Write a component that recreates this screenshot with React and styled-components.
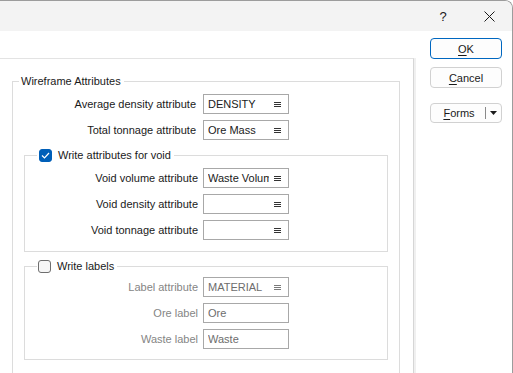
import React from "react";
import styled, { createGlobalStyle } from "styled-components";

const Global = createGlobalStyle`
  body { margin: 0; background: #fff; }
  * { box-sizing: border-box; }
`;

const FONT = `"Segoe UI", "Liberation Sans", Arial, sans-serif`;

const Window = styled.div`
  width: 513px;
  height: 373px;
  overflow: hidden;
  background: #fff;
  border-top: 1px solid #9c9c9c;
  border-right: 1px solid #9c9c9c;
  border-top-right-radius: 8px;
  font-family: ${FONT};
  font-size: 11px;
  color: #1a1a1a;
`;

const TitleBar = styled.div`
  height: 30px;
  background: #f3f3f3;
  display: flex;
  justify-content: flex-end;
  align-items: center;
`;

const TitleButton = styled.div`
  width: 46px;
  height: 30px;
  display: flex;
  align-items: center;
  justify-content: center;
  font-size: 13px;
  color: #1a1a1a;
`;

const Body = styled.div`
  display: flex;
  align-items: flex-start;
`;

const Panel = styled.div`
  margin-top: 27px;
  width: 414px;
  height: 330px;
  border-top: 1px solid #e3e3e3;
  border-right: 1px solid #d6d6d6;
  box-shadow: 2px 0 0 #f0f0f0;
  padding-left: 12px;
`;

const ButtonColumn = styled.div`
  margin-top: 7px;
  margin-left: 16px;
  display: flex;
  flex-direction: column;
  width: 72px;
`;

const Button = styled.div`
  height: ${(p) => p.$h || 21}px;
  margin-top: ${(p) => p.$mt || 0}px;
  border: 1px solid ${(p) => (p.$default ? "#0067c0" : "#d1d1d1")};
  border-radius: 4px;
  background: #fdfdfd;
  display: flex;
  align-items: center;
  justify-content: center;
  color: #1a1a1a;
`;

const Mnemonic = styled.span`
  text-decoration: underline;
  text-underline-offset: 2px;
`;

const SplitLabel = styled.div`
  flex: 1;
  text-align: center;
  padding-left: 2px;
`;

const SplitDivider = styled.div`
  width: 1px;
  height: 12px;
  background: #8a8a8a;
`;

const SplitArrow = styled.div`
  width: 15px;
  display: flex;
  justify-content: center;
  align-items: center;
`;

const Group = styled.fieldset`
  margin: ${(p) => p.$mt || 0}px ${(p) => p.$mx || 0}px 0;
  padding: ${(p) => p.$pt || 5}px 0 ${(p) => p.$pb || 10}px;
  border: 1px solid #dcdcdc;
  width: ${(p) => (p.$w ? p.$w + "px" : "auto")};
  height: ${(p) => (p.$hgt ? p.$hgt + "px" : "auto")};
  min-width: 0;
  display: flex;
  flex-direction: column;
  gap: ${(p) => p.$gap || 6}px;
`;

const Legend = styled.legend`
  margin-left: ${(p) => p.$ml}px;
  padding: 0 3px 0 ${(p) => p.$pl || 2}px;
  height: 16px;
  line-height: 16px;
  display: flex;
  align-items: center;
  gap: 6px;
  color: #1a1a1a;
`;

const Check = styled.span`
  width: 13px;
  height: 13px;
  border-radius: 3px;
  display: inline-flex;
  align-items: center;
  justify-content: center;
  background: ${(p) => (p.$checked ? "#005fb8" : "#f6f6f6")};
  border: 1px solid ${(p) => (p.$checked ? "#005fb8" : "#6e6e6e")};
`;

const Row = styled.div`
  display: grid;
  grid-template-columns: ${(p) => p.$label}px 86px;
  column-gap: ${(p) => p.$gap}px;
  align-items: center;
  height: 20px;
`;

const Label = styled.span`
  text-align: right;
  white-space: nowrap;
  color: ${(p) => (p.$disabled ? "#858585" : "#1a1a1a")};
`;

const Input = styled.div`
  height: 20px;
  border: 1px solid #a8a8a8;
  display: flex;
  align-items: center;
  padding: 0 7px 0 4px;
  color: ${(p) => (p.$disabled ? "#6d6d6d" : "#1a1a1a")};
  background: #fff;
`;

const Value = styled.span`
  flex: 1;
  overflow: hidden;
  white-space: nowrap;
  margin-right: 5px;
`;

const ListIcon = ({ disabled }) => (
  <svg width="7" height="7" viewBox="0 0 7 7">
    <g stroke={disabled ? "#7a7a7a" : "#333"} strokeWidth="1">
      <line x1="0" y1="1.5" x2="7" y2="1.5" />
      <line x1="0" y1="3.5" x2="7" y2="3.5" />
      <line x1="0" y1="5.5" x2="7" y2="5.5" />
    </g>
  </svg>
);

const Field = ({ label, value, list, disabled, labelW, gap }) => (
  <Row $label={labelW} $gap={gap}>
    <Label $disabled={disabled}>{label}</Label>
    <Input $disabled={disabled}>
      <Value>{value}</Value>
      {list && <ListIcon disabled={disabled} />}
    </Input>
  </Row>
);

export default function App() {
  return (
    <>
      <Global />
      <Window>
        <TitleBar>
          <TitleButton>?</TitleButton>
          <TitleButton>
            <svg width="11" height="11" viewBox="0 0 11 11">
              <path d="M0.5 0.5 L10.5 10.5 M10.5 0.5 L0.5 10.5" stroke="#1a1a1a" strokeWidth="1" />
            </svg>
          </TitleButton>
        </TitleBar>
        <Body>
          <Panel>
            <Group $mt={14} $w={388} $hgt={320} $pt={5}>
              <Legend $ml={6}>Wireframe Attributes</Legend>
              <Field label="Average density attribute" value="DENSITY" list labelW={183} gap={7} />
              <Field label="Total tonnage attribute" value="Ore Mass" list labelW={183} gap={7} />
              <Group $mt={1} $mx={11} $pt={5} $pb={11} $gap={6}>
                <Legend $ml={12} $pl={2}>
                  <Check $checked>
                    <svg width="9" height="7" viewBox="0 0 9 7">
                      <path d="M1 3.5 L3.5 6 L8 1" fill="none" stroke="#fff" strokeWidth="1.2" />
                    </svg>
                  </Check>
                  Write attributes for void
                </Legend>
                <Field label="Void volume attribute" value="Waste Volume" list labelW={173} gap={5} />
                <Field label="Void density attribute" value="" list labelW={173} gap={5} />
                <Field label="Void tonnage attribute" value="" list labelW={173} gap={5} />
              </Group>
              <Group $mt={0} $mx={11} $pt={3} $pb={10}>
                <Legend $ml={12} $pl={1}>
                  <Check />
                  Write labels
                </Legend>
                <Field label="Label attribute" value="MATERIAL" list disabled labelW={173} gap={5} />
                <Field label="Ore label" value="Ore" disabled labelW={173} gap={5} />
                <Field label="Waste label" value="Waste" disabled labelW={173} gap={5} />
              </Group>
            </Group>
          </Panel>
          <ButtonColumn>
            <Button $default>
              <span><Mnemonic>O</Mnemonic>K</span>
            </Button>
            <Button $mt={8}>
              <span><Mnemonic>C</Mnemonic>ancel</span>
            </Button>
            <Button $mt={15} $h={20}>
              <SplitLabel><Mnemonic>F</Mnemonic>orms</SplitLabel>
              <SplitDivider />
              <SplitArrow>
                <svg width="7" height="4" viewBox="0 0 7 4">
                  <path d="M0 0 L7 0 L3.5 4 Z" fill="#1a1a1a" />
                </svg>
              </SplitArrow>
            </Button>
          </ButtonColumn>
        </Body>
      </Window>
    </>
  );
}
